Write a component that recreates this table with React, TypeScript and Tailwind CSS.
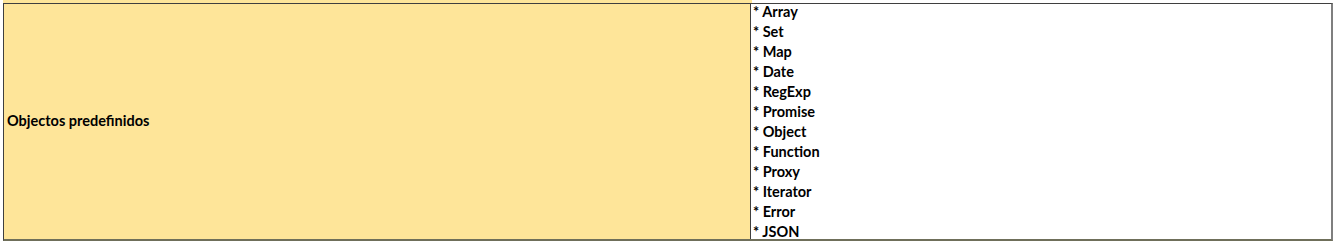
const items = [
  "Array",
  "Set",
  "Map",
  "Date",
  "RegExp",
  "Promise",
  "Object",
  "Function",
  "Proxy",
  "Iterator",
  "Error",
  "JSON",
];

export default function App() {
  return (
    <div className="w-[1334px] h-[242px] bg-white font-['Lato',sans-serif] text-black overflow-hidden">
      {/* sliver of the row above */}
      <div className="flex h-[3px] pl-[3px]">
        <div className="w-[749px] bg-[#fee599]" />
        <div className="flex-1" />
      </div>
      <div className="flex w-[1330px] ml-[3px] h-[238px] border-t border-t-[#3f3f3f] border-l border-l-[#3f3f3f] border-r-2 border-r-[#7f7f7f] border-b-2 border-b-[#6f6f5a] overflow-hidden">
        <div className="w-[747px] bg-[#fee599] border-r border-r-[#3f3f3f] flex items-center pl-[3px]">
          <span className="text-[14.5px] font-bold leading-none">Objectos predefinidos</span>
        </div>
        <div className="flex-1 flex flex-col pl-[2px] -mt-[2px]">
          {items.map((item) => (
            <div key={item} className="h-[20px] shrink-0 flex items-center text-[14.5px] font-bold leading-none">
              * {item}
            </div>
          ))}
        </div>
      </div>
    </div>
  );
}
